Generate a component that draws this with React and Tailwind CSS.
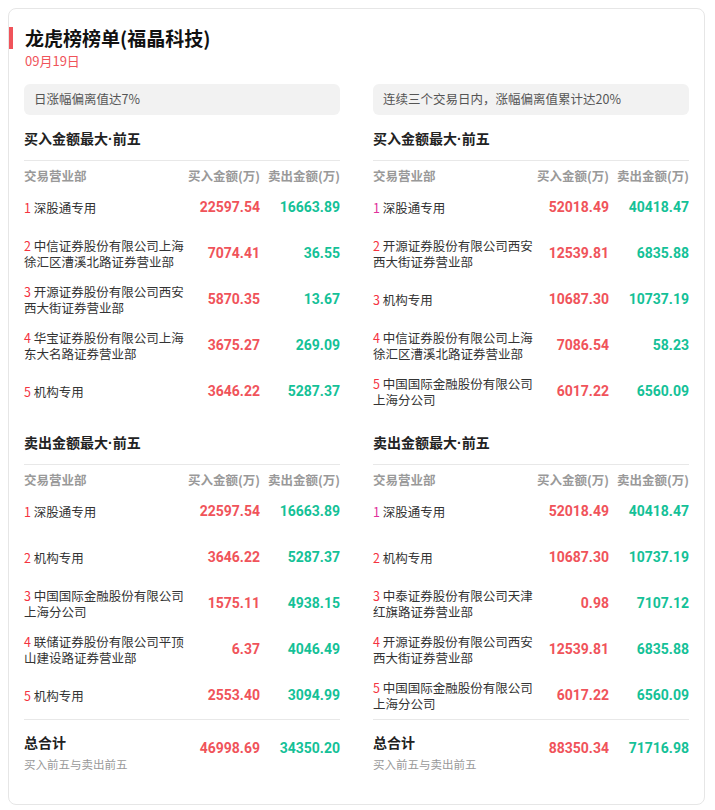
const L = {
  tag: "日涨幅偏离值达7%",
  buy: [["深股通专用","22597.54","16663.89"],["中信证券股份有限公司上海徐汇区漕溪北路证券营业部","7074.41","36.55"],["开源证券股份有限公司西安西大街证券营业部","5870.35","13.67"],["华宝证券股份有限公司上海东大名路证券营业部","3675.27","269.09"],["机构专用","3646.22","5287.37"]],
  sell: [["深股通专用","22597.54","16663.89"],["机构专用","3646.22","5287.37"],["中国国际金融股份有限公司上海分公司","1575.11","4938.15"],["联储证券股份有限公司平顶山建设路证券营业部","6.37","4046.49"],["机构专用","2553.40","3094.99"]],
  total: ["46998.69","34350.20"],
};
const R = {
  tag: "连续三个交易日内，涨幅偏离值累计达20%",
  buy: [["深股通专用","52018.49","40418.47"],["开源证券股份有限公司西安西大街证券营业部","12539.81","6835.88"],["机构专用","10687.30","10737.19"],["中信证券股份有限公司上海徐汇区漕溪北路证券营业部","7086.54","58.23"],["中国国际金融股份有限公司上海分公司","6017.22","6560.09"]],
  sell: [["深股通专用","52018.49","40418.47"],["机构专用","10687.30","10737.19"],["中泰证券股份有限公司天津红旗路证券营业部","0.98","7107.12"],["开源证券股份有限公司西安西大街证券营业部","12539.81","6835.88"],["中国国际金融股份有限公司上海分公司","6017.22","6560.09"]],
  total: ["88350.34","71716.98"],
};
const num = { fontFamily: "Roboto, 'Noto Sans CJK SC', sans-serif" };

function Table({ title, rows, pinkIdx, first }) {
  return (
    <div>
      <div className={"text-[14px] font-bold text-[#222] h-[22px] leading-[22px] " + (first ? "mt-[12px]" : "mt-[16px]")}>
        {title}<span style={{ fontFamily: "'Liberation Sans', sans-serif" }}>·</span>前五
      </div>
      <div className="border-t border-[#e8e8e8] mt-[11px]" />
      <div className="grid grid-cols-[164px_1fr_80px] text-[12.5px] text-[#999] font-bold h-[32px] items-center">
        <div>交易营业部</div><div className="text-right">买入金额(万)</div><div className="text-right">卖出金额(万)</div>
      </div>
      <div className="-mt-[8px]">
        {rows.map((r, i) => (
          <div key={i} className="grid grid-cols-[164px_1fr_80px] items-center h-[46px]">
            <div className="text-[12.5px] leading-[16px] text-[#333]">
              <span className={pinkIdx && i === 0 ? "text-[#e0309a]" : "text-[#f5333f]"}>{i + 1}</span> {r[0]}
            </div>
            <div className="text-right text-[14px] font-bold text-[#f0535a]" style={num}>{r[1]}</div>
            <div className="text-right text-[14px] font-bold text-[#14c197]" style={num}>{r[2]}</div>
          </div>
        ))}
      </div>
    </div>
  );
}

function Col({ d, pink }) {
  return (
    <div>
      <div className="bg-[#f2f2f2] rounded-md h-[31px] flex items-center px-[10px] text-[12.5px] text-[#555]">{d.tag}</div>
      <Table title="买入金额最大" rows={d.buy} pinkIdx={pink} first />
      <Table title="卖出金额最大" rows={d.sell} pinkIdx={pink} />
      <div className="border-t border-[#e8e8e8]" />
      <div className="grid grid-cols-[164px_1fr_80px] items-center pt-[12px]">
        <div>
          <div className="text-[14px] font-bold text-[#222] leading-[20px]">总合计</div>
          <div className="text-[11.5px] text-[#999] mt-[4px]">买入前五与卖出前五</div>
        </div>
        <div className="text-right text-[14px] font-bold text-[#f0535a] self-start mt-[6px]" style={num}>{d.total[0]}</div>
        <div className="text-right text-[14px] font-bold text-[#14c197] self-start mt-[6px]" style={num}>{d.total[1]}</div>
      </div>
    </div>
  );
}

export default function App() {
  return (
    <div className="w-[715px] h-[810px] bg-white p-[8px] pr-[10px]" style={{ fontFamily: "'Noto Sans CJK SC', sans-serif" }}>
      <div className="border border-[#e6e6e6] rounded-lg h-[797px] pt-[17px]">
        <div className="flex items-center">
          <div className="w-[4px] h-[22px] bg-[#f0535a]" />
          <div className="ml-[12px] text-[19px] font-bold text-[#111] leading-[24px]">龙虎榜榜单(福晶科技)</div>
        </div>
        <div className="ml-[16px] text-[13px] text-[#f0535a] mt-[1px]">09月19日</div>
        <div className="grid grid-cols-2 gap-[33px] px-[15px] mt-[13px]">
          <Col d={L} />
          <Col d={R} pink />
        </div>
      </div>
    </div>
  );
}
